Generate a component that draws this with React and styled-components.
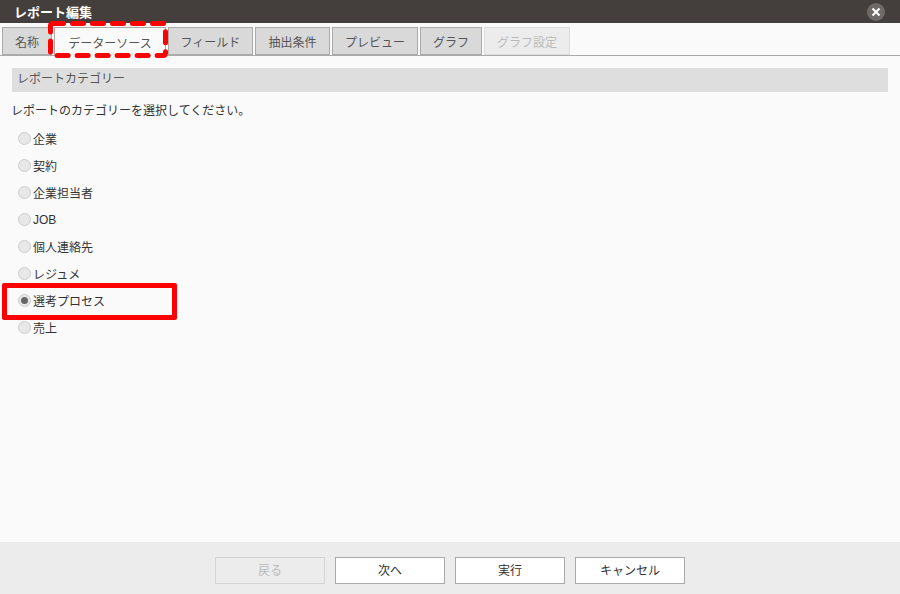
import React from "react";
import styled, { createGlobalStyle } from "styled-components";

const GlobalStyle = createGlobalStyle`
  html, body {
    margin: 0;
    padding: 0;
    background: #fafafa;
  }
  body {
    font-family: "Liberation Sans", "Noto Sans CJK JP", sans-serif;
    font-size: 12px;
    color: #333;
  }
`;

const Dialog = styled.div`
  position: relative;
  width: 900px;
  height: 594px;
  display: flex;
  flex-direction: column;
  background: #fafafa;
  overflow: hidden;
`;

const TitleBar = styled.div`
  height: 23px;
  flex: none;
  display: flex;
  align-items: center;
  justify-content: space-between;
  padding: 0 15px 0 14px;
  background: #443e3c;
  color: #fff;
  font-weight: 700;
  font-size: 13px;
`;

const CloseButton = styled.button`
  width: 18px;
  height: 18px;
  padding: 0;
  border: none;
  border-radius: 50%;
  background: #6e6a68;
  display: flex;
  align-items: center;
  justify-content: center;
`;

const TabBar = styled.div`
  height: 28px;
  flex: none;
  margin-top: 4px;
  padding-left: 2px;
  display: flex;
  gap: 2px;
  border-bottom: 1px solid #aaa;
`;

const Tab = styled.div`
  width: ${(p) => p.$width}px;
  height: ${(p) => (p.$active ? 29 : 28)}px;
  box-sizing: border-box;
  display: flex;
  align-items: center;
  justify-content: center;
  border: 1px solid ${(p) => (p.$disabled ? "#ddd" : "#aaa")};
  border-bottom: ${(p) => (p.$active ? "none" : undefined)};
  background: ${(p) => (p.$active ? "#fafafa" : p.$disabled ? "#ececec" : "#d9d9d9")};
  color: ${(p) => (p.$disabled ? "#bbb" : "#555")};
  font-size: 12px;
`;

const Content = styled.div`
  flex: 1;
  padding: 12px 12px 0;
`;

const SectionHeader = styled.div`
  height: 24px;
  line-height: 23px;
  padding-left: 5px;
  background: #dedede;
  color: #555;
  font-size: 12px;
`;

const Lead = styled.p`
  margin: 10px 0 0 -1px;
  height: 19px;
  line-height: 19px;
  font-size: 12px;
  color: #333;
`;

const RadioList = styled.div`
  margin-top: 4px;
  display: flex;
  flex-direction: column;
`;

const RadioRow = styled.label`
  height: 27px;
  display: flex;
  align-items: center;
  gap: 2px;
  padding-left: 6px;
  font-size: 12px;
  color: #333;
`;

const RadioDot = styled.span`
  width: 13px;
  height: 13px;
  box-sizing: border-box;
  flex: none;
  border-radius: 50%;
  border: 1px solid #ccc;
  background: #e8e8e8;
  display: flex;
  align-items: center;
  justify-content: center;

  &::after {
    content: "";
    display: ${(p) => (p.$checked ? "block" : "none")};
    width: 7px;
    height: 7px;
    border-radius: 50%;
    background: #666;
  }
`;

const Footer = styled.div`
  height: 52px;
  flex: none;
  box-sizing: border-box;
  display: flex;
  justify-content: center;
  align-items: flex-start;
  gap: 10px;
  padding-top: 15px;
  background: #ececec;
`;

const FooterButton = styled.button`
  width: 110px;
  height: 27px;
  padding: 0 0 2px;
  font-family: inherit;
  font-size: 12px;
  border: 1px solid ${(p) => (p.disabled ? "#d4d4d4" : "#aaa")};
  background: ${(p) => (p.disabled ? "#ececec" : "#fff")};
  color: ${(p) => (p.disabled ? "#bbb" : "#333")};
`;

const DashedMark = styled.svg`
  position: absolute;
  left: 46px;
  top: 19px;
`;

const SolidMark = styled.div`
  position: absolute;
  left: 2px;
  top: 283px;
  width: 175px;
  height: 37px;
  box-sizing: border-box;
  border: 5px solid #f00;
  border-radius: 2px;
`;

const tabs = [
  { label: "名称", width: 50 },
  { label: "データーソース", width: 112, active: true },
  { label: "フィールド", width: 85 },
  { label: "抽出条件", width: 75 },
  { label: "プレビュー", width: 86 },
  { label: "グラフ", width: 62 },
  { label: "グラフ設定", width: 86, disabled: true },
];

const categories = ["企業", "契約", "企業担当者", "JOB", "個人連絡先", "レジュメ", "選考プロセス", "売上"];

export default function App() {
  return (
    <Dialog>
      <GlobalStyle />
      <TitleBar>
        レポート編集
        <CloseButton aria-label="閉じる">
          <svg width="10" height="10" viewBox="0 0 10 10">
            <path d="M1.5 1.5l7 7M8.5 1.5l-7 7" stroke="#fff" strokeWidth="2" />
          </svg>
        </CloseButton>
      </TitleBar>
      <TabBar>
        {tabs.map((t) => (
          <Tab key={t.label} $width={t.width} $active={t.active} $disabled={t.disabled}>
            {t.label}
          </Tab>
        ))}
      </TabBar>
      <Content>
        <SectionHeader>レポートカテゴリー</SectionHeader>
        <Lead>レポートのカテゴリーを選択してください。</Lead>
        <RadioList>
          {categories.map((c) => (
            <RadioRow key={c}>
              <RadioDot $checked={c === "選考プロセス"} />
              {c}
            </RadioRow>
          ))}
        </RadioList>
      </Content>
      <Footer>
        <FooterButton disabled>戻る</FooterButton>
        <FooterButton>次へ</FooterButton>
        <FooterButton>実行</FooterButton>
        <FooterButton>キャンセル</FooterButton>
      </Footer>
      <DashedMark width="124" height="42" viewBox="0 0 124 42">
        <rect
          x="4.5"
          y="4.5"
          width="115"
          height="32"
          rx="2"
          fill="none"
          stroke="#f00"
          strokeWidth="5"
          strokeLinecap="round"
          strokeDasharray="11 9"
        />
      </DashedMark>
      <SolidMark />
    </Dialog>
  );
}
